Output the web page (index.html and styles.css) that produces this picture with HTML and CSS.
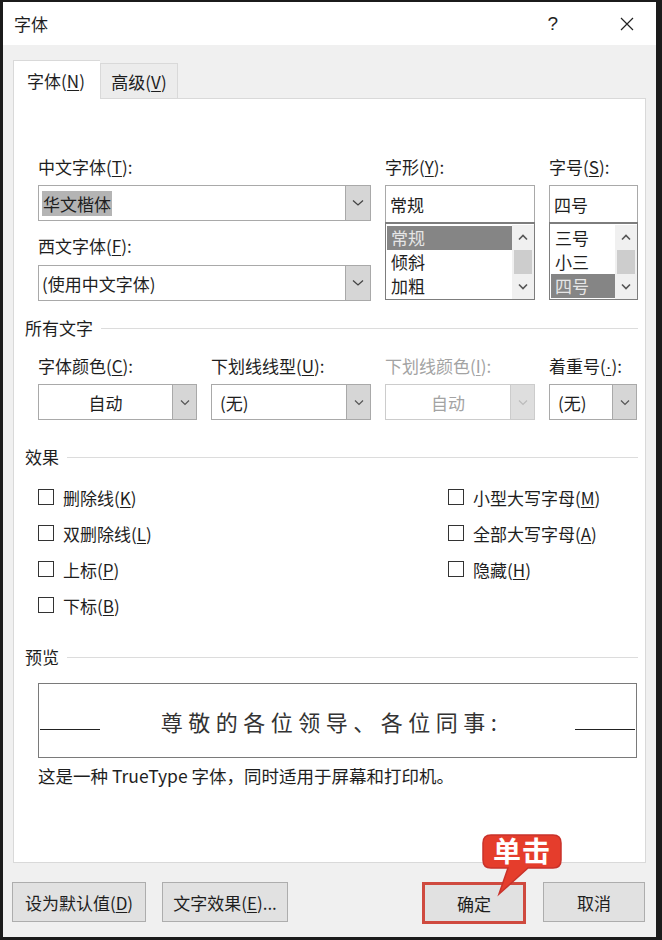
FILE: index.html
```html
<!DOCTYPE html>
<html lang="zh-CN">
<head>
    <meta charset="UTF-8">
    <title>字体</title>
    <link rel="stylesheet" href="styles.css">
</head>
<body>
<div class="window">
    <div class="titlebar">
        <span class="title">字体</span>
        <span class="help">?</span>
        <svg class="close" width="14" height="14" viewBox="0 0 14 14">
            <path d="M1 1 L13 13 M13 1 L1 13" stroke="#222" stroke-width="1.2" fill="none"/>
        </svg>
    </div>

    <div class="dialog-body">
        <div class="tabs">
            <div class="tab active">字体(<u>N</u>)</div>
            <div class="tab">高级(<u>V</u>)</div>
        </div>

        <div class="panel">
            <div class="top-grid">
                <div class="col">
                    <div class="label">中文字体(<u>T</u>):</div>
                    <div class="combo">
                        <span class="combo-text"><span class="sel-text">华文楷体</span></span>
                        <span class="combo-arrow"><svg width="12" height="8" viewBox="0 0 12 8"><path d="M1 1.5 L6 6 L11 1.5" stroke="#444" stroke-width="1.3" fill="none"/></svg></span>
                    </div>
                    <div class="label label-gap">西文字体(<u>F</u>):</div>
                    <div class="combo">
                        <span class="combo-text">(使用中文字体)</span>
                        <span class="combo-arrow"><svg width="12" height="8" viewBox="0 0 12 8"><path d="M1 1.5 L6 6 L11 1.5" stroke="#444" stroke-width="1.3" fill="none"/></svg></span>
                    </div>
                </div>
                <div class="col">
                    <div class="label">字形(<u>Y</u>):</div>
                    <div class="textbox">常规</div>
                    <div class="listbox">
                        <div class="items">
                            <div class="item selected">常规</div>
                            <div class="item">倾斜</div>
                            <div class="item">加粗</div>
                        </div>
                        <div class="scrollbar">
                            <span class="sb-btn"><svg width="10" height="7" viewBox="0 0 10 7"><path d="M1 5.5 L5 1.5 L9 5.5" stroke="#555" stroke-width="1.6" fill="none"/></svg></span>
                            <span class="sb-thumb"></span>
                            <span class="sb-btn"><svg width="10" height="7" viewBox="0 0 10 7"><path d="M1 1.5 L5 5.5 L9 1.5" stroke="#555" stroke-width="1.6" fill="none"/></svg></span>
                        </div>
                    </div>
                </div>
                <div class="col">
                    <div class="label">字号(<u>S</u>):</div>
                    <div class="textbox">四号</div>
                    <div class="listbox">
                        <div class="items">
                            <div class="item">三号</div>
                            <div class="item">小三</div>
                            <div class="item selected">四号</div>
                        </div>
                        <div class="scrollbar">
                            <span class="sb-btn"><svg width="10" height="7" viewBox="0 0 10 7"><path d="M1 5.5 L5 1.5 L9 5.5" stroke="#555" stroke-width="1.6" fill="none"/></svg></span>
                            <span class="sb-thumb"></span>
                            <span class="sb-btn"><svg width="10" height="7" viewBox="0 0 10 7"><path d="M1 1.5 L5 5.5 L9 1.5" stroke="#555" stroke-width="1.6" fill="none"/></svg></span>
                        </div>
                    </div>
                </div>
            </div>

            <div class="section-title sec-all"><span>所有文字</span></div>
            <div class="drop-grid">
                <div class="label">字体颜色(<u>C</u>):</div>
                <div class="label">下划线线型(<u>U</u>):</div>
                <div class="label disabled">下划线颜色(<u>I</u>):</div>
                <div class="label">着重号(<u class="dot">·</u>):</div>

                <div class="dropdown">
                    <span class="drop-text center">自动</span>
                    <span class="drop-arrow"><svg width="10" height="7" viewBox="0 0 10 7"><path d="M1 1.5 L5 5.5 L9 1.5" stroke="#555" stroke-width="1.2" fill="none"/></svg></span>
                </div>
                <div class="dropdown">
                    <span class="drop-text">(无)</span>
                    <span class="drop-arrow"><svg width="10" height="7" viewBox="0 0 10 7"><path d="M1 1.5 L5 5.5 L9 1.5" stroke="#555" stroke-width="1.2" fill="none"/></svg></span>
                </div>
                <div class="dropdown disabled">
                    <span class="drop-text center">自动</span>
                    <span class="drop-arrow"><svg width="10" height="7" viewBox="0 0 10 7"><path d="M1 1.5 L5 5.5 L9 1.5" stroke="#bbb" stroke-width="1.2" fill="none"/></svg></span>
                </div>
                <div class="dropdown">
                    <span class="drop-text">(无)</span>
                    <span class="drop-arrow"><svg width="10" height="7" viewBox="0 0 10 7"><path d="M1 1.5 L5 5.5 L9 1.5" stroke="#555" stroke-width="1.2" fill="none"/></svg></span>
                </div>
            </div>

            <div class="section-title sec-effect"><span>效果</span></div>
            <div class="check-grid">
                <label class="check"><span class="box"></span>删除线(<u>K</u>)</label>
                <label class="check"><span class="box"></span>小型大写字母(<u>M</u>)</label>
                <label class="check"><span class="box"></span>双删除线(<u>L</u>)</label>
                <label class="check"><span class="box"></span>全部大写字母(<u>A</u>)</label>
                <label class="check"><span class="box"></span>上标(<u>P</u>)</label>
                <label class="check"><span class="box"></span>隐藏(<u>H</u>)</label>
                <label class="check"><span class="box"></span>下标(<u>B</u>)</label>
            </div>

            <div class="section-title sec-preview"><span>预览</span></div>
            <div class="preview">
                <span class="pv-line"></span>
                <span class="pv-text">尊敬的各位领导、各位同事:</span>
                <span class="pv-line"></span>
            </div>
            <div class="caption">这是一种 TrueType 字体，同时适用于屏幕和打印机。</div>
        </div>

        <div class="buttons">
            <div class="btn w-default">设为默认值(<u>D</u>)</div>
            <div class="btn w-effect">文字效果(<u>E</u>)...</div>
            <div class="spacer"></div>
            <div class="ok-wrap">
                <div class="btn btn-ok">确定</div>
                <div class="callout">
                    <svg width="84" height="64" viewBox="0 0 84 64">
                        <path d="M10 2 H72 Q80 2 80 10 V27 Q80 35 72 35 H47 L18 61 L27 35 H10 Q2 35 2 27 V10 Q2 2 10 2 Z" fill="#e53d2c" stroke="#c9322a" stroke-width="1.5"/>
                    </svg>
                    <span class="callout-text">单击</span>
                </div>
            </div>
            <div class="btn w-cancel">取消</div>
        </div>
    </div>
</div>
</body>
</html>
```

FILE: styles.css
```css
body {
    margin: 0;
    padding: 0;
    background: #1b1b1b;
    font-family: "Noto Sans CJK SC", sans-serif;
    font-size: 17px;
    color: #1e1e1e;
}

u {
    text-decoration: underline;
    text-underline-offset: 2px;
}

u.dot {
    font-family: "Liberation Sans", sans-serif;
}

.window {
    width: 662px;
    height: 940px;
    box-sizing: border-box;
    border-style: solid;
    border-color: #1b1b1b;
    border-width: 2px 6px 3px 3px;
    display: flex;
    flex-direction: column;
}

.titlebar {
    height: 43px;
    background: #fff;
    display: flex;
    align-items: center;
    padding: 0 0 0 11px;
}

.title {
    font-size: 17px;
    flex: 1;
}

.help {
    font-family: "Liberation Sans", sans-serif;
    font-size: 19px;
    margin-right: 62px;
}

.close {
    margin-right: 22px;
}

.dialog-body {
    flex: 1;
    background: #f0f0f0;
    padding: 15px 10px 0 10px;
    display: flex;
    flex-direction: column;
}

.tabs {
    display: flex;
    align-items: flex-end;
    height: 38px;
}

.tab {
    height: 35px;
    width: 78px;
    box-sizing: border-box;
    border: 1px solid #d9d9d9;
    border-bottom: none;
    background: #ececec;
    display: flex;
    align-items: center;
    justify-content: center;
}

.tab.active {
    height: 39px;
    width: 87px;
    background: #fff;
    border-right: none;
    position: relative;
    z-index: 1;
    margin-bottom: -1px;
    padding-right: 2px;
}

.panel {
    height: 765px;
    box-sizing: border-box;
    background: #fff;
    border: 1px solid #d9d9d9;
    padding: 57px 7px 0 11px;
}

.label {
    line-height: 22px;
    height: 22px;
    white-space: nowrap;
}

.label.disabled {
    color: #a3a3a3;
}

.top-grid {
    display: grid;
    grid-template-columns: 333px 150px 89px;
    column-gap: 14px;
    margin-left: 13px;
}

.top-grid .label {
    margin-bottom: 7px;
}

.top-grid .label-gap {
    margin-top: 14px;
    margin-bottom: 8px;
}

.combo {
    height: 36px;
    box-sizing: border-box;
    border: 1px solid #a9a9a9;
    display: flex;
}

.combo-text {
    flex: 1;
    display: flex;
    align-items: center;
    padding-left: 3px;
}

.sel-text {
    background: #b4b4b4;
    padding: 0 1px;
}

.combo-arrow {
    width: 24px;
    background: #d6d6d6;
    border-left: 1px solid #a9a9a9;
    display: flex;
    align-items: center;
    justify-content: center;
}

.textbox {
    height: 37px;
    box-sizing: border-box;
    border: 1px solid #a9a9a9;
    border-bottom: none;
    padding-left: 4px;
    display: flex;
    align-items: center;
}

.listbox {
    height: 78px;
    box-sizing: border-box;
    border: 1px solid #7d7d7d;
    border-top-width: 2px;
    display: flex;
    padding: 2px 1px 1px 1px;
}

.items {
    flex: 1;
}

.item {
    height: 24px;
    line-height: 24px;
    padding-left: 4px;
}

.item.selected {
    background: #858585;
    color: #e6e6e6;
}

.scrollbar {
    width: 22px;
    background: #f0f0f0;
    display: flex;
    flex-direction: column;
    margin: -1px -1px -1px 0;
}

.sb-btn {
    height: 25px;
    display: flex;
    align-items: center;
    justify-content: center;
}

.sb-thumb {
    flex: 1;
    background: #cdcdcd;
    margin: 0 2px;
}

.section-title {
    display: flex;
    align-items: center;
    line-height: 22px;
    height: 22px;
}

.section-title::after {
    content: "";
    flex: 1;
    height: 1px;
    background: #dcdcdc;
    margin-left: 8px;
}

.sec-all {
    margin-top: 16px;
}

.sec-effect {
    margin-top: 26px;
}

.sec-preview {
    margin-top: 23px;
}

.drop-grid {
    display: grid;
    grid-template-columns: 159px 160px 150px 88px;
    column-gap: 14px;
    row-gap: 7px;
    margin: 16px 0 0 13px;
}

.dropdown {
    height: 36px;
    box-sizing: border-box;
    border: 1px solid #a9a9a9;
    display: flex;
    background: #fff;
}

.drop-text {
    flex: 1;
    display: flex;
    align-items: center;
    padding-left: 8px;
}

.drop-text.center {
    justify-content: center;
    padding-left: 0;
}

.drop-arrow {
    width: 23px;
    background: #d6d6d6;
    border-left: 1px solid #a9a9a9;
    display: flex;
    align-items: center;
    justify-content: center;
}

.dropdown.disabled {
    border-color: #cccccc;
    color: #a3a3a3;
}

.dropdown.disabled .drop-arrow {
    background: #dedede;
    border-left-color: #cccccc;
}

.check-grid {
    display: grid;
    grid-template-columns: 410px 1fr;
    grid-auto-rows: 36px;
    margin: 11px 0 0 13px;
}

.check {
    display: flex;
    align-items: center;
    white-space: nowrap;
}

.box {
    width: 14px;
    height: 14px;
    border: 1px solid #333;
    background: #fff;
    margin-right: 9px;
}

.preview {
    height: 75px;
    box-sizing: border-box;
    border: 1px solid #7a7a7a;
    margin: 15px 1px 0 13px;
    display: flex;
    align-items: center;
    padding: 0 1px;
}

.pv-line {
    width: 60px;
    height: 1px;
    background: #222;
    margin-top: 17px;
}

.pv-text {
    flex: 1;
    text-align: center;
    font-size: 22px;
    letter-spacing: 5.5px;
    color: #333;
    padding-right: 12px;
}

.caption {
    margin: 7px 0 0 13px;
    line-height: 22px;
    font-size: 17.5px;
}

.buttons {
    display: flex;
    margin-top: 19px;
    margin-left: -1px;
}

.btn {
    height: 40px;
    box-sizing: border-box;
    border: 1px solid #adadad;
    background: #e1e1e1;
    display: flex;
    align-items: center;
    justify-content: center;
}

.w-default {
    width: 134px;
}

.w-effect {
    width: 126px;
    margin-left: 16px;
}

.spacer {
    flex: 1;
}

.ok-wrap {
    position: relative;
    margin-right: 17px;
}

.btn-ok {
    width: 104px;
    height: 42px;
    border: 3px solid #cf4a3f;
}

.w-cancel {
    width: 102px;
    margin-right: 1px;
}

.callout {
    position: absolute;
    left: 59px;
    top: -49px;
    width: 84px;
    height: 64px;
}

.callout svg {
    display: block;
}

.callout-text {
    position: absolute;
    left: 2px;
    top: 1px;
    width: 78px;
    height: 33px;
    line-height: 33px;
    text-align: center;
    color: #fff;
    font-weight: bold;
    font-size: 28px;
    letter-spacing: 1px;
}
```
